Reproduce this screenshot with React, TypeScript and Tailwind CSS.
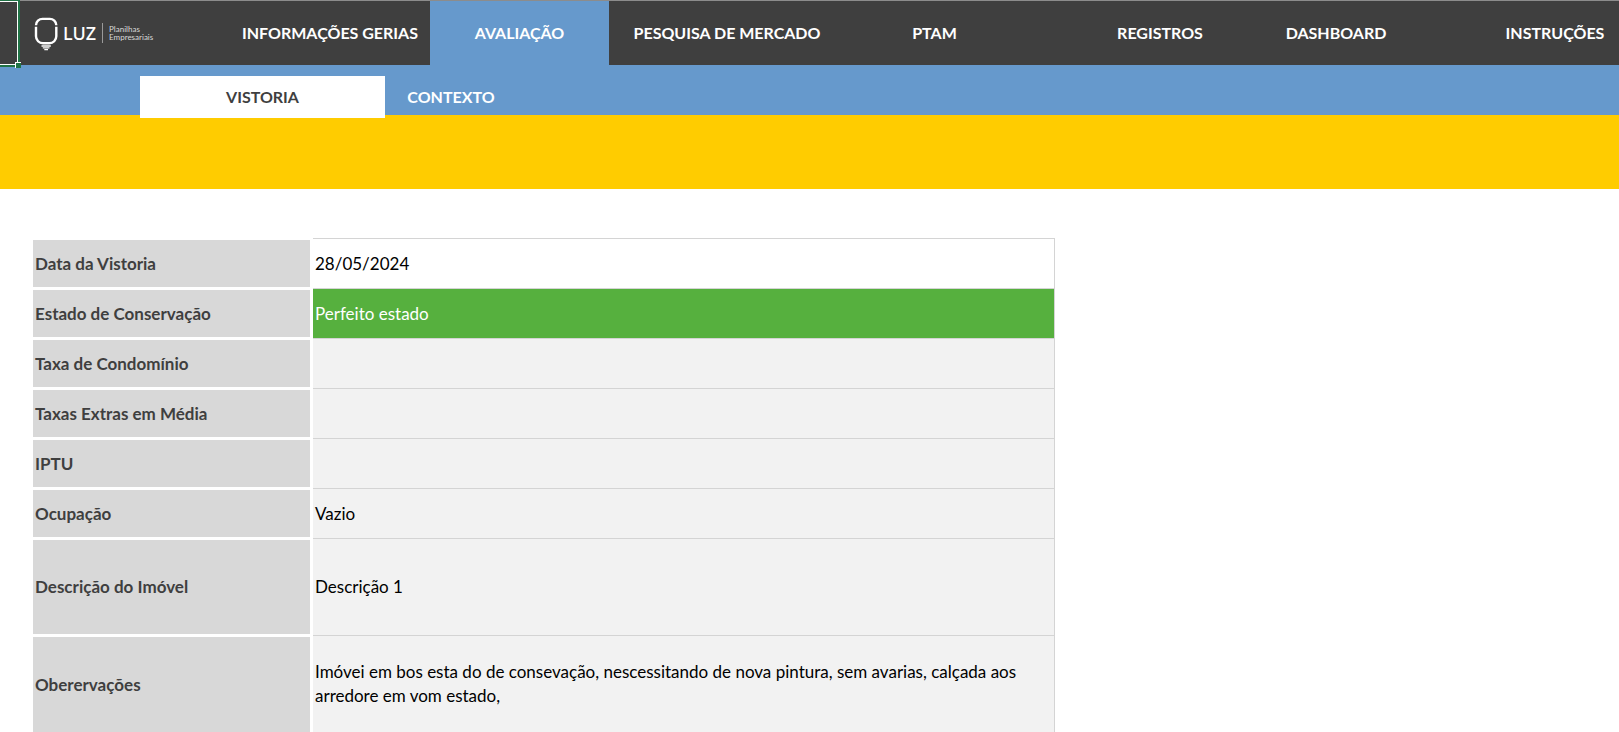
import { clsx } from 'clsx'

interface NavItem {
  label: string
  className?: string
  active?: boolean
}

interface Row {
  label: string
  value?: string
  tall?: boolean
  cell?: string
}

const navItems: NavItem[] = [
  { label: 'INFORMAÇÕES GERIAS', className: 'col-start-2' },
  { label: 'AVALIAÇÃO', active: true },
  { label: 'PESQUISA DE MERCADO' },
  { label: 'PTAM' },
  { label: 'REGISTROS', className: 'col-start-7' },
  { label: 'DASHBOARD' },
  { label: 'INSTRUÇÕES', className: 'col-start-10' },
]

const rows: Row[] = [
  { label: 'Data da Vistoria', value: '28/05/2024', cell: 'bg-white text-black' },
  { label: 'Estado de Conservação', value: 'Perfeito estado', cell: 'bg-[#56b03e] text-white' },
  { label: 'Taxa de Condomínio' },
  { label: 'Taxas Extras em Média' },
  { label: 'IPTU' },
  { label: 'Ocupação', value: 'Vazio' },
  { label: 'Descrição do Imóvel', value: 'Descrição 1', tall: true },
  {
    label: 'Oberervações',
    value:
      'Imóvei em bos esta do de consevação, nescessitando de nova pintura, sem avarias, calçada aos arredore em vom estado,',
    tall: true,
  },
]

function Logo() {
  return (
    <a href="#" className="flex items-center pl-[34px] text-white">
      <svg width="24" height="36" viewBox="0 0 24 36" fill="none" stroke="currentColor">
        <path d="M2 10.200a6.500 6.500 0 0 1 6.500-6.300h7.300a6.500 6.500 0 0 1 6.500 6.300" strokeWidth="2.400" />
        <path d="M2 11.800v9.500a7 7 0 0 0 7 7h6.300a7 7 0 0 0 7-7v-9.500" strokeWidth="2.400" />
        <path d="M7.500 31h9.300M8.800 32.900h6.700M10.300 34.700h3.700" strokeWidth="1.300" />
      </svg>
      <span className="ml-[5px] font-['Noto_Sans',sans-serif] text-[18px] leading-5 font-medium">LUZ</span>
      <span className="ml-[6px] h-5 w-px bg-[#9a9a9a]" />
      <span className="ml-[6px] text-[8px] leading-2 text-[#d8d8d8]">
        Planilhas
        <br />
        Empresariais
      </span>
    </a>
  )
}

// Outline of the selected cell with its fill handle
function CellSelection() {
  return (
    <div className="absolute top-0 left-0 z-20 h-[67px] w-5 border-t border-r-2 border-b-2 border-[#217346]">
      <div className="h-full border-t border-r border-b border-white" />
      <div className="absolute -right-[3px] -bottom-[3px] size-[6px] border-t border-l border-white bg-[#217346]" />
    </div>
  )
}

function MainNav() {
  return (
    <nav className="grid h-[65px] grid-cols-[230fr_200fr_179fr_236fr_179fr_48fr_176fr_176fr_67fr_128fr] border-t border-[#8c8c8c] bg-[#3f3f3f]">
      <Logo />
      {navItems.map(item => (
        <a
          key={item.label}
          href="#"
          className={clsx(
            'flex items-center justify-center text-[16px] font-bold whitespace-nowrap text-white',
            item.className,
            item.active && 'bg-[#6699cc]',
          )}
        >
          {item.label}
        </a>
      ))}
    </nav>
  )
}

function SubNav() {
  return (
    <nav className="flex h-[50px] bg-[#6699cc] pt-[11px] pl-[140px] text-[16px] font-bold">
      <a href="#" className="relative z-10 flex h-[42px] w-[245px] items-center justify-center bg-white text-[#3f3f3f]">
        VISTORIA
      </a>
      <a href="#" className="flex h-[42px] w-[132px] items-center justify-center text-white">
        CONTEXTO
      </a>
    </nav>
  )
}

export default function App() {
  return (
    <div className="relative bg-white font-['Lato',sans-serif]">
      <CellSelection />
      <header>
        <MainNav />
        <SubNav />
        <div className="h-[74px] bg-[#ffcc00]" />
      </header>

      <main className="pt-[49px] pl-[33px]">
        <table className="w-full max-w-[1022px] table-fixed border-separate border-spacing-0 text-left text-[17px] leading-6">
          <colgroup>
            <col className="w-[280px]" />
            <col />
          </colgroup>
          <tbody>
            {rows.map(row => (
              <tr key={row.label} className={clsx('group', row.tall ? 'h-[97px]' : 'h-[50px]')}>
                <th
                  scope="row"
                  className="border-t-2 border-r-3 border-b border-white bg-[#d8d8d8] px-[2px] py-0 font-bold text-[#3f3f3f] group-last:border-b-0"
                >
                  {row.label}
                </th>
                <td
                  className={clsx(
                    'border-t border-r border-[#d4d4d4] py-0 pr-6 pl-[2px]',
                    row.cell ?? 'bg-[#f2f2f2] text-black',
                  )}
                >
                  {row.value}
                </td>
              </tr>
            ))}
          </tbody>
        </table>
      </main>
    </div>
  )
}
